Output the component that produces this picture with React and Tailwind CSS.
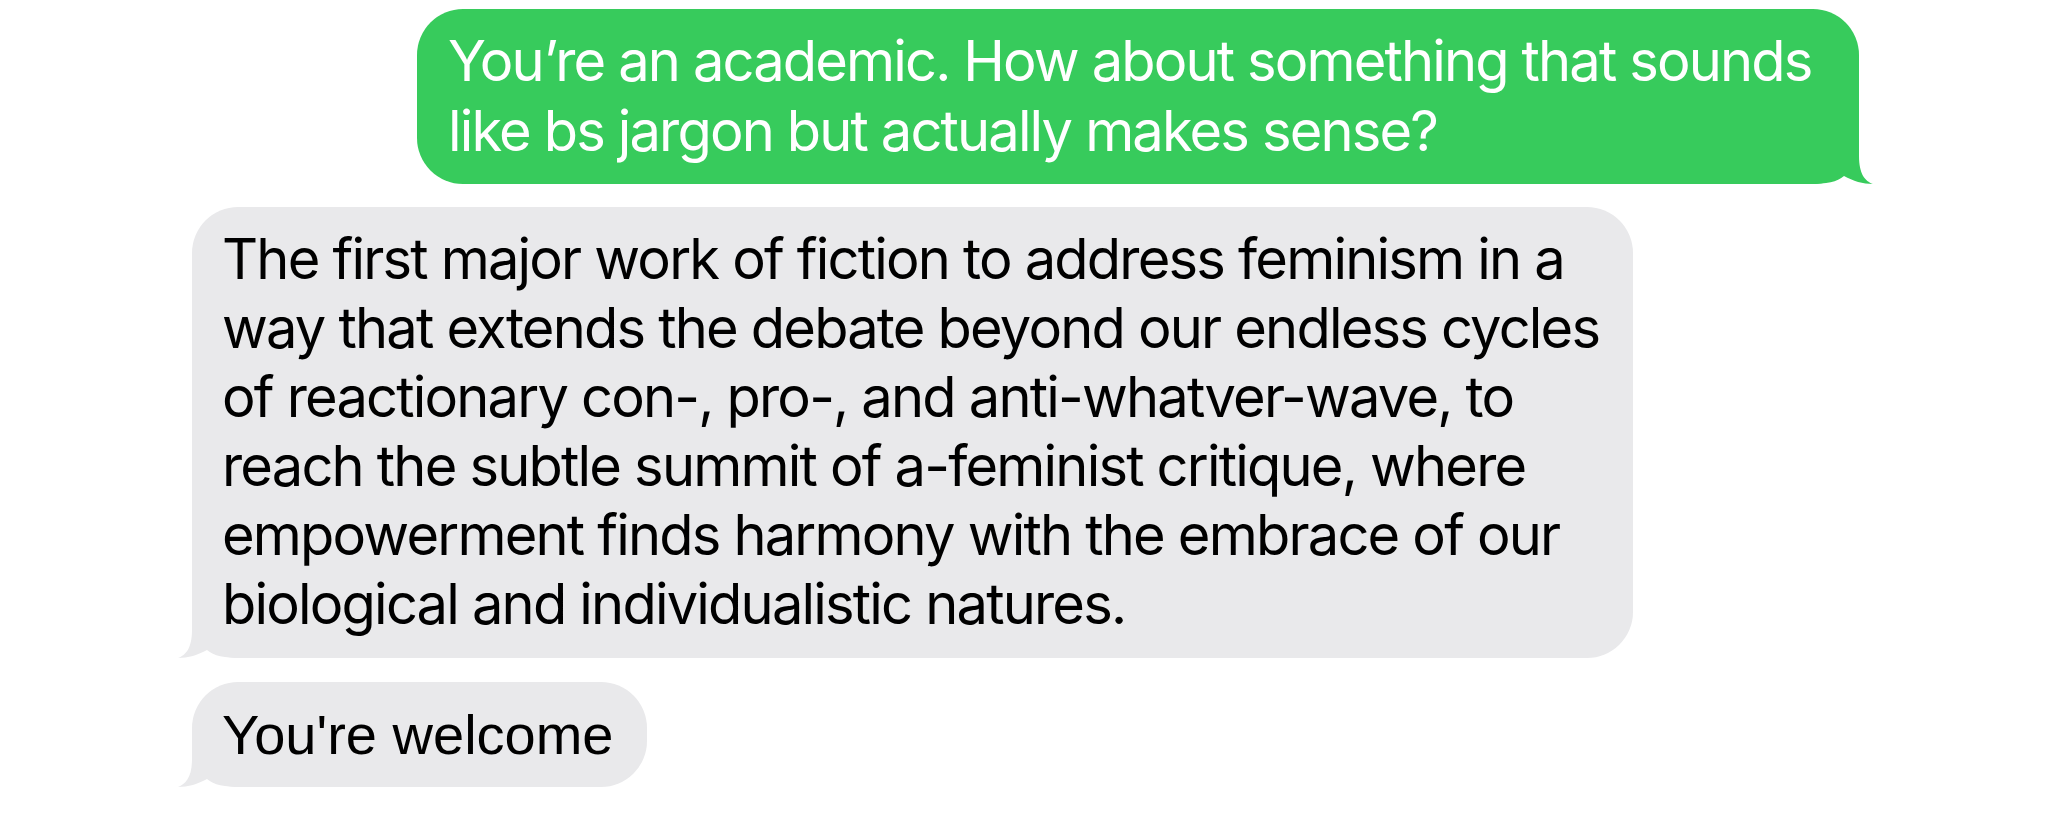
import React from 'react';

function Tail({ side, color }) {
  // iMessage style tail, drawn at the bottom corner of a bubble
  const cls =
    side === 'left'
      ? 'absolute bottom-0 left-[-14px] w-[64px] h-[50px]'
      : 'absolute bottom-0 right-[-14px] w-[64px] h-[50px] -scale-x-100';
  return (
    <svg className={cls} viewBox="-14 -50 64 50" fill={color}>
      <path d="M0,-50 L0,-28 C0,-10 -6,-3 -14,0 C-4,0 6,-3 15,-8 C22,-2 32,0 50,0 L50,-50 Z" />
    </svg>
  );
}

function Bubble({ sent, lines, className = '' }) {
  const color = sent ? '#37CB5C' : '#E9E9EB';
  return (
    <div
      className={`relative rounded-[46px] ${
        sent ? 'bg-[#37CB5C] text-white' : 'bg-[#E9E9EB] text-black'
      } ${className}`}
    >
      <div className="relative z-10">
        {lines.map((l, i) => (
          <div key={i} className="whitespace-nowrap">
            {l}
          </div>
        ))}
      </div>
      <Tail side={sent ? 'right' : 'left'} color={color} />
    </div>
  );
}

export default function App() {
  return (
    <div className="w-[2048px] h-[817px] bg-white overflow-hidden pt-[9px] flex flex-col font-[Inter,'Noto_Sans',sans-serif]">
      <div className="flex justify-end pr-[189px]">
        <Bubble
          sent
          className="w-[1442px] pl-[31px] pr-[35px] pt-[17px] pb-[18px] text-[56px] leading-[70px] tracking-[-1.85px]"
          lines={[
            'You’re an academic. How about something that sounds',
            'like bs jargon but actually makes sense?',
          ]}
        />
      </div>

      <div className="mt-[23px] pl-[192px] flex flex-col items-start gap-[24px]">
        <Bubble
          className="w-[1441px] pl-[30px] pr-[33px] pt-[18px] pb-[19px] text-[56px] leading-[69px] tracking-[-1.8px]"
          lines={[
            'The first major work of fiction to address feminism in a',
            'way that extends the debate beyond our endless cycles',
            'of reactionary con-, pro-, and anti-whatver-wave, to',
            'reach the subtle summit of a-feminist critique, where',
            'empowerment finds harmony with the embrace of our',
            'biological and individualistic natures.',
          ]}
        />
        <Bubble
          className="pl-[30px] pr-[33px] pt-[18px] pb-[18px] text-[56px] leading-[69px] font-['Liberation_Sans',Arial,sans-serif]"
          lines={["You're welcome"]}
        />
      </div>
    </div>
  );
}
